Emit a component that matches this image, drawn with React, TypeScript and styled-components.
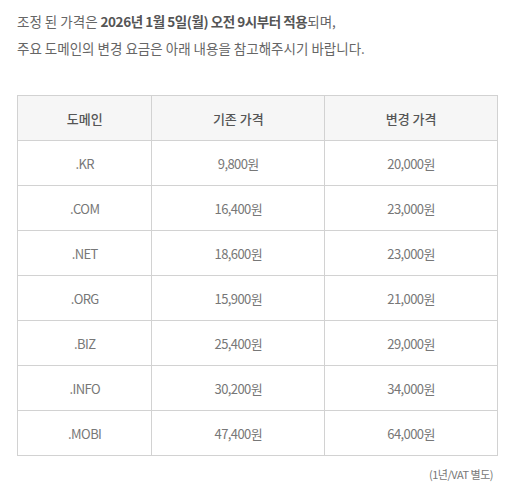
import { FC } from "react";
import styled, { createGlobalStyle } from "styled-components";

const prices = [
  { domain: ".KR", before: "9,800원", after: "20,000원" },
  { domain: ".COM", before: "16,400원", after: "23,000원" },
  { domain: ".NET", before: "18,600원", after: "23,000원" },
  { domain: ".ORG", before: "15,900원", after: "21,000원" },
  { domain: ".BIZ", before: "25,400원", after: "29,000원" },
  { domain: ".INFO", before: "30,200원", after: "34,000원" },
  { domain: ".MOBI", before: "47,400원", after: "64,000원" },
];

const App: FC = () => {
  return (
    <Wrapper>
      <GlobalStyle />
      <Notice>
        조정 된 가격은 <strong>2026년 1월 5일(월) 오전 9시부터 적용</strong>
        되며,
        <br />
        주요 도메인의 변경 요금은 아래 내용을 참고해주시기 바랍니다.
      </Notice>
      <PriceTable>
        <colgroup>
          <col style={{ width: "28%" }} />
          <col style={{ width: "36%" }} />
          <col style={{ width: "36%" }} />
        </colgroup>
        <thead>
          <tr>
            <HeadCell>도메인</HeadCell>
            <HeadCell>기존 가격</HeadCell>
            <HeadCell>변경 가격</HeadCell>
          </tr>
        </thead>
        <tbody>
          {prices.map(({ domain, before, after }) => (
            <tr key={domain}>
              <Cell>{domain}</Cell>
              <Cell>{before}</Cell>
              <Cell>{after}</Cell>
            </tr>
          ))}
        </tbody>
      </PriceTable>
      <Footnote>(1년/VAT 별도)</Footnote>
    </Wrapper>
  );
};

export default App;

const GlobalStyle = createGlobalStyle`
  body {
    margin: 0;
    background: #fff;
    font-family: "Noto Sans CJK KR", "Noto Sans", sans-serif;
  }
`;

const Wrapper = styled.div`
  padding: 8px 33px 0 17px;
  color: #666;
`;

const Notice = styled.p`
  margin: 0;
  font-size: 13.5px;
  line-height: 27px;
  letter-spacing: 0;

  strong {
    font-weight: 700;
    color: #555;
    letter-spacing: -0.45px;
  }
`;

const PriceTable = styled.table`
  width: 481px;
  margin-top: 33px;
  border-collapse: collapse;
  table-layout: fixed;
  font-size: 13px;
`;

const HeadCell = styled.th`
  height: 44px;
  padding: 0;
  background: #f6f6f6;
  border: 1px solid #d2d2d2;
  color: #555;
  font-weight: 500;
  letter-spacing: 0;
`;

const Cell = styled.td`
  height: 44px;
  padding: 0;
  border: 1px solid #d2d2d2;
  text-align: center;
  color: #777;
  letter-spacing: -0.6px;
`;

const Footnote = styled.p`
  width: 476px;
  margin: 10px 0 0;
  text-align: right;
  font-size: 11px;
  color: #777;
  letter-spacing: -0.5px;
`;
